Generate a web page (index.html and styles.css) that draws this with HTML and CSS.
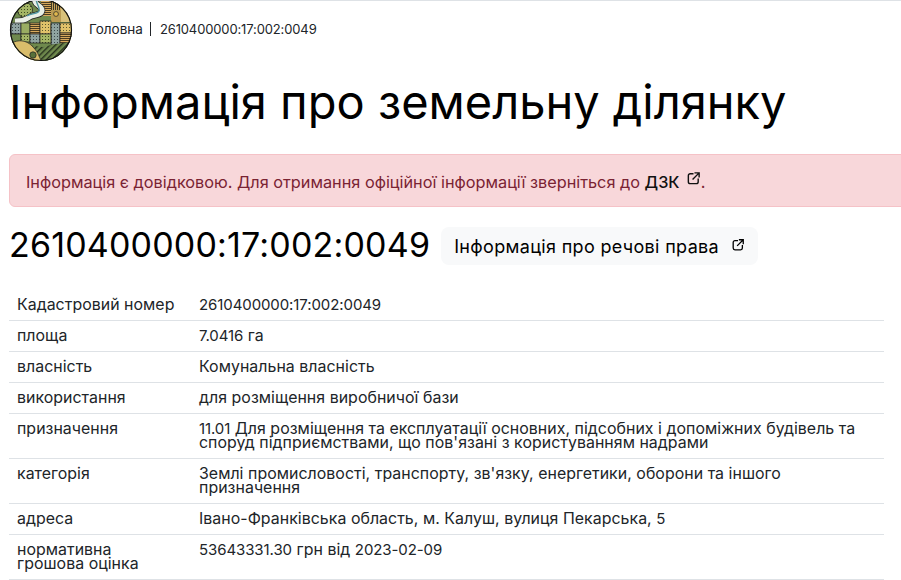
FILE: index.html
```html
<!DOCTYPE html>
<html lang="uk">
<head>
<meta charset="utf-8">
<title>Інформація про земельну ділянку</title>
<link rel="stylesheet" href="styles.css">
</head>
<body>
<header class="top">
  <svg class="logo" viewBox="0 0 64 62" aria-hidden="true">
    <defs>
      <clipPath id="disc"><circle cx="32" cy="30" r="31"/></clipPath>
      <pattern id="hatch" width="2" height="2" patternUnits="userSpaceOnUse"><rect width="2" height="2" fill="#c9a35c"/><rect width="1" height="2" fill="#3b3a26"/></pattern>
      <pattern id="hatchH" width="2" height="2" patternUnits="userSpaceOnUse"><rect width="2" height="2" fill="#d8a95c"/><rect width="2" height="1" fill="#4a3d22"/></pattern>
      <pattern id="diag" width="4" height="4" patternUnits="userSpaceOnUse" patternTransform="rotate(45)"><rect width="4" height="4" fill="#6f8a4d"/><rect width="1.400" height="4" fill="#26301c"/></pattern>
      <pattern id="dots" width="3" height="3" patternUnits="userSpaceOnUse"><rect width="3" height="3" fill="#e0c26a"/><rect width="1" height="1" fill="#5b5a30"/></pattern>
      <pattern id="grey" width="3" height="3" patternUnits="userSpaceOnUse"><rect width="3" height="3" fill="#8fa3a0"/><rect width="1" height="1" fill="#3c4a4a"/></pattern>
      <pattern id="green" width="3" height="3" patternUnits="userSpaceOnUse"><rect width="3" height="3" fill="#a3b565"/><rect width="1" height="1" fill="#3c4a22"/></pattern>
    </defs>
    <g clip-path="url(#disc)">
      <rect width="64" height="62" fill="#6f8a4d"/>
      <circle cx="16" cy="10" r="7.500" fill="url(#green)" stroke="#222" stroke-width=".8"/>
      <rect x="32" y="0" width="10" height="16" fill="url(#hatchH)"/>
      <rect x="42" y="0" width="10" height="22" fill="url(#hatch)"/>
      <rect x="52" y="0" width="12" height="22" fill="#d9c27a"/>
      <rect x="42" y="10" width="10" height="12" fill="#b99b52"/>
      <circle cx="47" cy="14" r="2.400" fill="#e0b84e" stroke="#222" stroke-width=".7"/>
      <path d="M25 -1C26 6 34 6 33 11 32 16 24 14 19 18 15 21 11 21 6 21" fill="none" stroke="#222" stroke-width="6.500"/>
      <path d="M25 -1C26 6 34 6 33 11 32 16 24 14 19 18 15 21 11 21 6 21" fill="none" stroke="#e9efe6" stroke-width="5"/>
      <path d="M27 -1C28 6 31 7 30 11 29 14 23 13 18 16" fill="none" stroke="#4f97a0" stroke-width="1.400"/>
      <rect x="2" y="23" width="10" height="11" fill="url(#grey)" stroke="#222" stroke-width=".7"/>
      <rect x="12" y="23" width="9" height="11" fill="#9aad62" stroke="#222" stroke-width=".7"/>
      <rect x="21" y="23" width="10" height="11" fill="url(#hatchH)" stroke="#222" stroke-width=".7"/>
      <rect x="31" y="21" width="11" height="13" fill="url(#dots)" stroke="#222" stroke-width=".7"/>
      <rect x="42" y="23" width="9" height="22" rx="1" fill="url(#grey)" stroke="#222" stroke-width=".8"/>
      <rect x="51" y="23" width="12" height="10" fill="url(#dots)" stroke="#222" stroke-width=".7"/>
      <rect x="2" y="34" width="10" height="9" fill="#6f8a4d" stroke="#222" stroke-width=".7"/>
      <rect x="12" y="34" width="9" height="8" fill="url(#green)" stroke="#222" stroke-width=".7"/>
      <rect x="21" y="34" width="10" height="9" fill="url(#grey)" stroke="#222" stroke-width=".7"/>
      <rect x="31" y="34" width="11" height="9" fill="url(#green)" stroke="#222" stroke-width=".7"/>
      <rect x="51" y="33" width="12" height="11" fill="url(#hatchH)" stroke="#222" stroke-width=".7"/>
      <path d="M0 43 34 47 46 44 64 42V62H0Z" fill="url(#diag)"/>
      <path d="M-2 46C8 38 18 40 24 47 30 53 30 58 34 64H-2Z" fill="#d9bd6b" stroke="#222" stroke-width=".7"/>
      <circle cx="24" cy="55" r="3.200" fill="#58703a" stroke="#222" stroke-width=".7"/>
    </g>
    <circle cx="32" cy="30" r="30.500" fill="none" stroke="#111" stroke-width="1.200"/>
  </svg>
  <nav class="crumbs"><a class="first">Головна</a><span class="crumb-num">2610400000:17:002:0049</span></nav>
</header>
<h1 class="title">Інформація про земельну ділянку</h1>
<div class="alert">Інформація є довідковою. Для отримання офіційної інформації зверніться до <a class="ext">ДЗК <svg class="ico alert-ico" viewBox="0 0 16 16"><path d="M8 3H4.500A2 2 0 0 0 2.500 5v6.500a2 2 0 0 0 2 2H11a2 2 0 0 0 2-2V8M9 2h5v5M14 2 7 9" fill="none" stroke="currentColor" stroke-width="1.500"/></svg></a>.</div>
<div class="head">
  <h2 class="num">2610400000:17:002:0049</h2>
  <a class="btn">Інформація про речові права <svg class="ico btn-ico" viewBox="0 0 16 16"><path d="M8 3H4.500A2 2 0 0 0 2.500 5v6.500a2 2 0 0 0 2 2H11a2 2 0 0 0 2-2V8M9 2h5v5M14 2 7 9" fill="none" stroke="currentColor" stroke-width="1.500"/></svg></a>
</div>
<table class="info">
  <tr><th>Кадастровий номер</th><td><span class="n">2610400000:17:002:0049</span></td></tr>
  <tr><th>площа</th><td><span class="n">7.0416</span> га</td></tr>
  <tr><th>власність</th><td>Комунальна власність</td></tr>
  <tr><th>використання</th><td>для розміщення виробничої бази</td></tr>
  <tr><th>призначення</th><td><span class="n">11.01</span> Для розміщення та експлуатації основних, підсобних і допоміжних будівель та споруд підприємствами, що пов'язані з користуванням надрами</td></tr>
  <tr><th>категорія</th><td>Землі промисловості, транспорту, зв'язку, енергетики, оборони та іншого призначення</td></tr>
  <tr><th>адреса</th><td>Івано-Франківська область, м. Калуш, вулиця Пекарська, <span class="n">5</span></td></tr>
  <tr><th>нормативна<br>грошова оцінка</th><td><span class="n">53643331.30</span> грн від <span class="n">2023-02-09</span></td></tr>
</table>
</body>
</html>
```
FILE: styles.css
```css
html, body { margin: 0; height: 100%; overflow: hidden; }
body {
  background: #fff;
  color: #000;
  font-family: Inter, "Liberation Sans", sans-serif;
  font-size: 16px;
  border-top: 1px solid #dee2e6;
  box-sizing: border-box;
  width: 901px;
  height: 580px;
}
.top { display: flex; align-items: center; padding-left: 9px; height: 60px; }
.logo { width: 64px; height: 62px; display: block; flex: none; }
.crumbs { display: flex; align-items: center; margin: 0 0 4px 16px; font-size: 13px; color: #212529; line-height: 14px; }
.first { font-size: 13.5px; padding-right: 7px; margin-right: 9px; border-right: 1px solid #212529; }
.crumb-num { letter-spacing: -.13px; }
.title { margin: 14px 0 0 9px; font-size: 47px; line-height: 54px; font-weight: 400; white-space: nowrap; }
.alert {
  margin: 25px -40px 0 9px;
  padding: 16px;
  height: 53px;
  box-sizing: border-box;
  background: #f8d7da;
  border: 1px solid #f5c2c7;
  border-radius: 6px;
  color: #7a2333;
  font-size: 16.28px;
  line-height: 20px;
}
.ext { color: #111; font-weight: 500; }
.ico { width: 14px; height: 14px; vertical-align: 1px; }
.alert-ico { width: 15px; height: 15px; vertical-align: 2px; margin-left: 2px; }
.head { display: flex; align-items: flex-start; margin: 19px 0 0 9px; gap: 11px; height: 40px; }
.num { margin: -1px 0 0; font-size: 34px; font-weight: 400; line-height: 40px; white-space: nowrap; letter-spacing: .18px; }
.btn {
  display: flex; align-items: center; height: 38px; box-sizing: border-box;
  padding: 0 13px; margin-top: 1px; background: #f8f9fa; border-radius: 8px;
  font-size: 18px; color: #000; letter-spacing: .33px; white-space: nowrap;
}
.btn-ico { margin-left: 12px; margin-top: -3px; }
.info { margin: 24px 0 0 9px; width: 875px; border-collapse: collapse; font-size: 15.9px; line-height: 14px; color: #212529; table-layout: fixed; }
.info th, .info td { padding: 8px; text-align: left; vertical-align: top; font-weight: 400; border-bottom: 1px solid #dee2e6; }
.info th { width: 166px; letter-spacing: .03px; }
.info td { letter-spacing: .04px; }
.n { font-size: 15px; letter-spacing: -.09px; }
```
